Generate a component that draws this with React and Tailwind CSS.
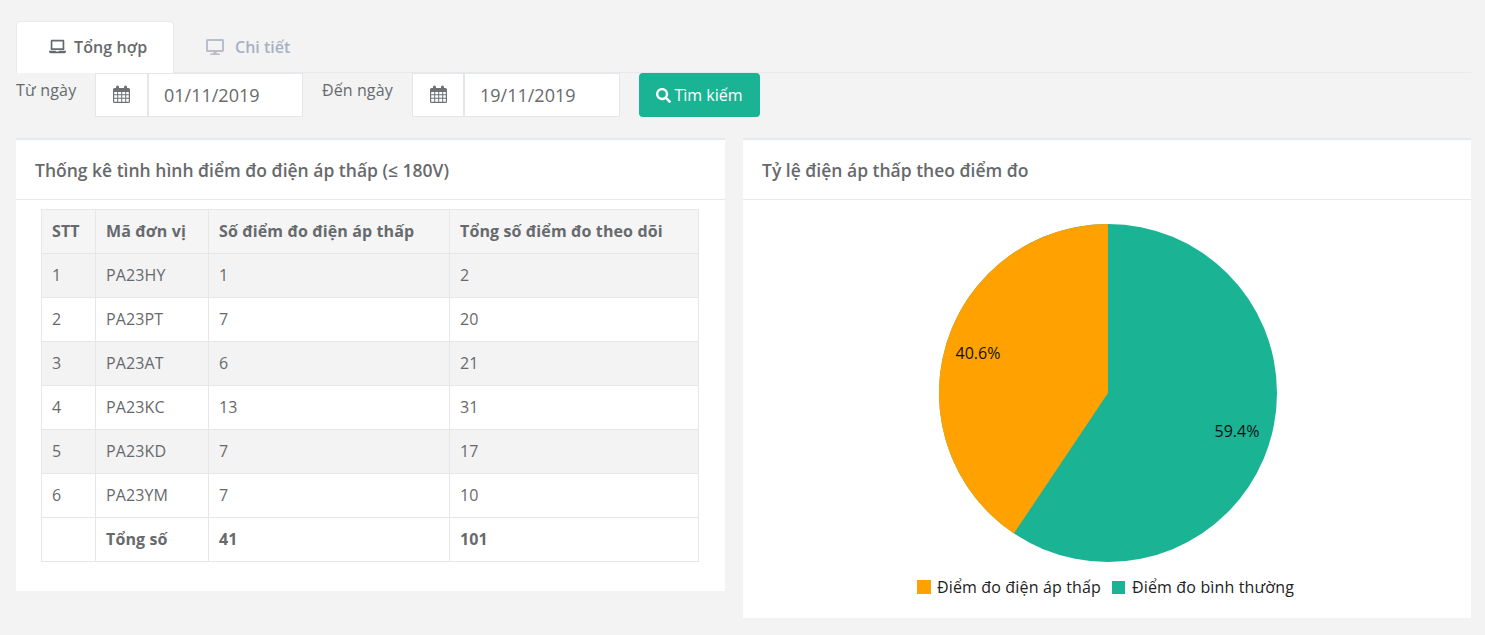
import React from 'react';
import { FaLaptop, FaDesktop, FaSearch } from 'react-icons/fa';

const rows = [
  ['1', 'PA23HY', '1', '2'],
  ['2', 'PA23PT', '7', '20'],
  ['3', 'PA23AT', '6', '21'],
  ['4', 'PA23KC', '13', '31'],
  ['5', 'PA23KD', '7', '17'],
  ['6', 'PA23YM', '7', '10'],
];

const CalendarIcon = () => (
  <svg width="17" height="18" viewBox="0 0 17 18" fill="#6f7274" className="mb-[2px]">
    <path fillRule="evenodd" d="M1.5 3H3V2a1.5 1.5 0 0 1 3 0v1h5V2a1.5 1.5 0 0 1 3 0v1h1.5A1.5 1.5 0 0 1 17 4.500v12a1.500 1.500 0 0 1-1.500 1.500h-14A1.500 1.500 0 0 1 0 16.500v-12A1.500 1.500 0 0 1 1.500 3zM1.200 7v2.300h3V7zm4 0v2.300h3V7zm4 0v2.300h3V7zm4 0v2.300h2.600V7zm-12 3.300v2.400h3v-2.400zm4 0v2.400h3v-2.400zm4 0v2.400h3v-2.400zm4 0v2.400h2.600v-2.400zm-12 3.400v3h3v-3zm4 0v3h3v-3zm4 0v3h3v-3zm4 0v3h2.600v-3z" />
  </svg>
);

const DateField = ({ value, addonWidth, inputWidth }) => (
  <div className="flex h-11">
    <div className={`${addonWidth} flex items-center justify-center bg-white border border-[#e5e6e7]`}>
      <CalendarIcon />
    </div>
    <div className={`${inputWidth} flex items-center pl-[15px] bg-white border border-[#e5e6e7] text-[18px] text-[#676a6c]`}>
      {value}
    </div>
  </div>
);

const Panel = ({ title, children }) => (
  <div className="bg-white border-t-2 border-[#e7eaec]">
    <div className="h-[60px] pt-[2px] flex items-center px-[19px] border-b border-[#e7eaec] text-[17.5px] font-semibold text-[#676a6c]">
      {title}
    </div>
    {children}
  </div>
);

const PieChart = () => (
  <svg width="340" height="340" viewBox="0 0 340 340" className="block">
    <circle cx="170" cy="170" r="169" fill="#1ab394" />
    <path d="M170 170 L75.900 310.400 A169 169 0 0 1 170 1 Z" fill="#ffa100" />
    <text x="40" y="136" textAnchor="middle" fontSize="16" fill="#111">40.6%</text>
    <text x="299" y="214" textAnchor="middle" fontSize="16" fill="#111">59.4%</text>
  </svg>
);

export default function App() {
  return (
    <div className="min-h-[635px] bg-[#f3f3f4] pl-4 pr-[14px] pt-[21px] font-['Open_Sans',sans-serif] text-[#676a6c]">
      <div className="flex h-[52px] border-b border-[#e7eaec]">
        <div className="w-[158px] h-[52px] pb-[2px] pl-[32px] flex items-center gap-2 bg-white border border-b-0 border-[#e7eaec] rounded-t text-[16px] font-semibold tracking-[0.1px]">
          <FaLaptop className="w-[17px] h-[17px]" />
          <span>Tổng hợp</span>
        </div>
        <div className="flex items-center pl-[32px] gap-[11px] text-[16px] font-semibold text-[#a7b1c2]">
          <FaDesktop className="text-[18px] text-[#b9bec8]" />
          <span>Chi tiết</span>
        </div>
      </div>

      <div className="flex items-start h-11">
        <span className="w-[79px] mt-[4px] text-[16px] leading-[26px] tracking-[0.2px]">Từ ngày</span>
        <DateField value="01/11/2019" addonWidth="w-[53px]" inputWidth="w-[155px]" />
        <span className="w-[90px] ml-[19px] mt-[4px] text-[16px] leading-[26px] tracking-[0.1px]">Đến ngày</span>
        <DateField value="19/11/2019" addonWidth="w-[52px]" inputWidth="w-[156px]" />
        <button className="ml-[19px] w-[121px] h-11 flex items-center justify-center gap-[3px] bg-[#1ab394] rounded text-white text-[16px] font-medium">
          <FaSearch className="text-[15px]" />
          <span>Tìm kiếm</span>
        </button>
      </div>

      <div className="mt-[21px] grid grid-cols-[709px_728px] gap-[18px] items-start">
        <Panel title="Thống kê tình hình điểm đo điện áp thấp (≤ 180V)">
          <div className="pl-[25px] pt-[9px] pb-[29px]">
            <table className="w-[658px] table-fixed border-collapse text-[16px] tracking-[0.12px] text-[#676a6c]">
              <colgroup>
                <col className="w-[54px]" />
                <col className="w-[113px]" />
                <col className="w-[241px]" />
                <col />
              </colgroup>
              <thead>
                <tr className="h-11 bg-[#f5f5f6] text-left font-bold">
                  <th className="border border-[#e7e7e7] pl-[10px] pb-[2px]">STT</th>
                  <th className="border border-[#e7e7e7] pl-[10px] pb-[2px]">Mã đơn vị</th>
                  <th className="border border-[#e7e7e7] pl-[10px] pb-[2px]">Số điểm đo điện áp thấp</th>
                  <th className="border border-[#e7e7e7] pl-[10px] pb-[2px]">Tổng số điểm đo theo dõi</th>
                </tr>
              </thead>
              <tbody>
                {rows.map((r, i) => (
                  <tr key={r[0]} className={`h-11 ${i % 2 === 0 ? 'bg-[#f3f3f3]' : 'bg-white'}`}>
                    {r.map((c, j) => (
                      <td key={j} className="border border-[#e7e7e7] pl-[10px] pb-[2px]">{c}</td>
                    ))}
                  </tr>
                ))}
                <tr className="h-11 font-bold">
                  <td className="border border-[#e7e7e7] pl-[10px] pb-[2px]"></td>
                  <td className="border border-[#e7e7e7] pl-[10px] pb-[2px]">Tổng số</td>
                  <td className="border border-[#e7e7e7] pl-[10px] pb-[2px]">41</td>
                  <td className="border border-[#e7e7e7] pl-[10px] pb-[2px]">101</td>
                </tr>
              </tbody>
            </table>
          </div>
        </Panel>

        <Panel title="Tỷ lệ điện áp thấp theo điểm đo">
          <div className="h-[418px] pt-[23px] flex flex-col items-center">
            <div className="ml-[2px]">
              <PieChart />
            </div>
            <div className="mt-[12px] mr-[3px] flex items-center text-[16px] tracking-[0.15px] text-[#222]">
              <span className="w-[14px] h-[14px] bg-[#ffa100]" />
              <span className="ml-[6px]">Điểm đo điện áp thấp</span>
              <span className="ml-[11px] w-[13px] h-[13px] bg-[#1ab394]" />
              <span className="ml-[7px]">Điểm đo bình thường</span>
            </div>
          </div>
        </Panel>
      </div>
    </div>
  );
}
